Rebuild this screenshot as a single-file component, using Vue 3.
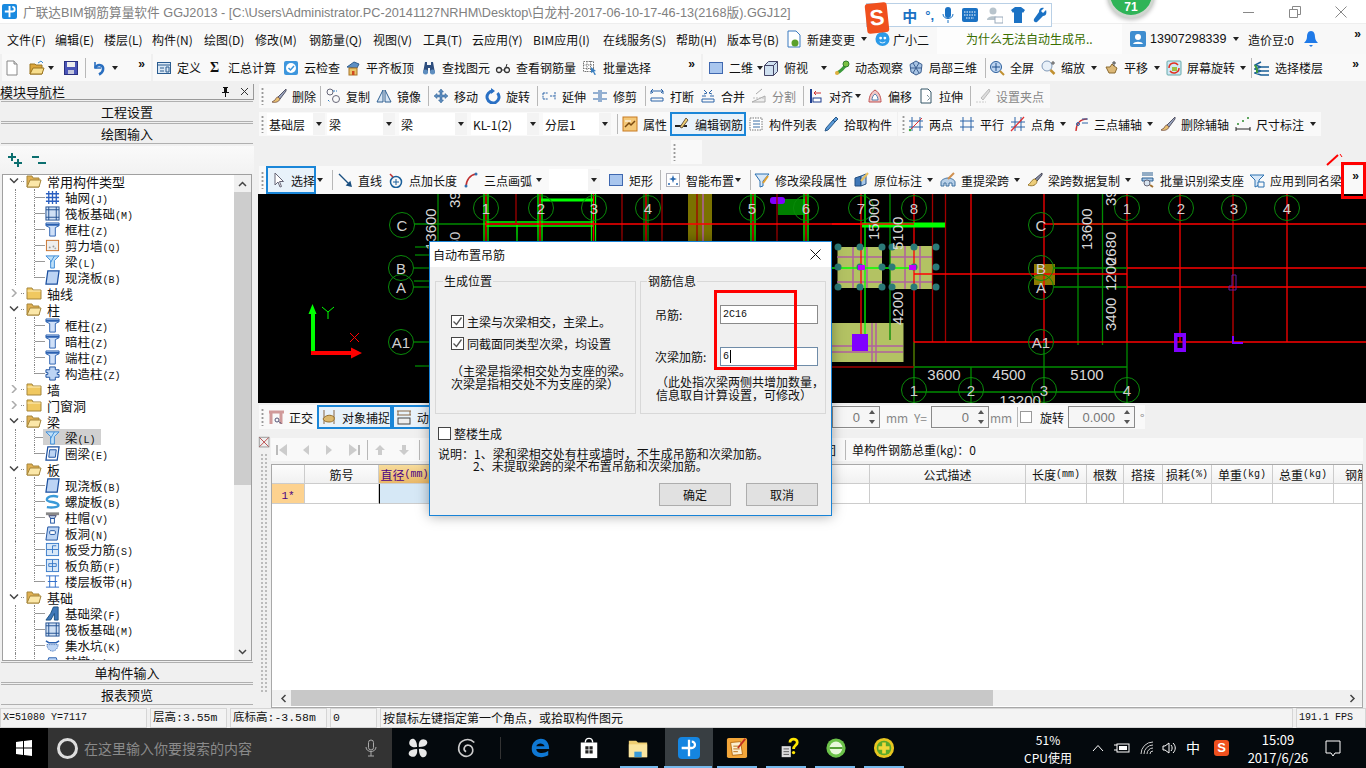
<script setup>
import { h } from 'vue'

const icons = {
  new: '<path d="M3 1h7l3 3v11H3z" fill="#fff" stroke="#888"/><path d="M10 1v3h3" fill="#ddd" stroke="#888"/>',
  open: '<path d="M1 4h5l1 1h6v9H1z" fill="#dba63c" stroke="#9a7420"/><path d="M4 8h11l-2 6H1z" fill="#f7de8d" stroke="#9a7420"/><path d="M9 3l3-2 2 2" fill="none" stroke="#3a8ad0"/>',
  save: '<rect x="1.500" y="1.500" width="13" height="13" fill="#4a55b8" stroke="#2a3080"/><rect x="4" y="2" width="8" height="5" fill="#eee"/><rect x="5" y="10" width="6" height="4" fill="#c5c8dd"/>',
  undo: '<path d="M4 2v6h6" fill="none" stroke="#2a6fc0" stroke-width="1.600"/><path d="M4 8c3-5 9-3 8 2-.4 2-2 3.500-4 4.500" fill="none" stroke="#2a6fc0" stroke-width="2.600"/>',
  def: '<rect x="1.500" y="2.500" width="13" height="11" fill="#dbe8f5" stroke="#2a5c90"/><path d="M2 5h12M4 8h4M4 11h4M10 7h3v5h-3z" fill="none" stroke="#2a5c90"/>',
  cloud: '<rect x="1" y="1" width="14" height="14" rx="2" fill="#3d96dd"/><circle cx="8" cy="8" r="5" fill="#fff"/><path d="M5.500 8l2 2 3.500-4" fill="none" stroke="#3d96dd" stroke-width="1.500"/>',
  flat: '<path d="M2 7l7-5 5 2-2 4z" fill="#5c8fc4" stroke="#305f90"/><rect x="4" y="8" width="8" height="7" fill="#e8c56a" stroke="#a8752a"/><rect x="7" y="11" width="2.500" height="4" fill="#d04a20"/>',
  binoc: '<path d="M4 2h2v3h4V2h2l2 11H9V8H7v5H2z" fill="#2f4f7f"/><circle cx="4.500" cy="12" r="2.500" fill="#5f8fc0"/><circle cx="11.500" cy="12" r="2.500" fill="#5f8fc0"/>',
  glass: '<circle cx="4" cy="10" r="2.500" fill="none" stroke="#333" stroke-width="1.300"/><circle cx="12" cy="10" r="2.500" fill="none" stroke="#333" stroke-width="1.300"/><path d="M6.500 10h3M11 7l1-3" stroke="#333"/>',
  batch: '<path d="M1.500 1.500h10v10h-10zM5 1v11M8.500 1v11M1 5h11M1 8.500h11" fill="#fff" stroke="#777" stroke-dasharray="1.500 1"/><path d="M9 7l5 4-2 .5 2 3-1.500.5-1.500-3-2 1z" fill="#3a7fc0"/>',
  rect: '<rect x="1.500" y="2.500" width="13" height="11" fill="#a9c6ee" stroke="#3f68b0"/>',
  box3d: '<path d="M1.500 5.500l4-4h9v10l-4 4h-9z" fill="#cfe0f0" stroke="#446"/><path d="M1.500 5.500h9v10M10.500 5.500l4-4" fill="none" stroke="#446"/>',
  orbit: '<path d="M3 13C6 12 11 7 13 3" stroke="#3b9a3b" stroke-width="3" fill="none"/><circle cx="12" cy="4" r="3" fill="#7ac043" stroke="#2f7a2f"/><circle cx="3" cy="13" r="2" fill="#e0b040"/>',
  cube: '<path d="M8 1l6 3.500-1 8L8 15 3 12 2 4.500z" fill="#a8c4e4" stroke="#3c5f90"/><path d="M5 3l6 10M11 3L5 13M2 8h12" stroke="#3c5f90" fill="none"/>',
  zoomall: '<circle cx="7" cy="7" r="5.500" fill="#bcd4f0" stroke="#2c5f9c"/><path d="M7 3v8M3 7h8" stroke="#1f4f8c"/><path d="M11 11l4 4" stroke="#c09030" stroke-width="2"/>',
  zoom: '<circle cx="7" cy="6" r="5" fill="#e8f0f8" stroke="#8099b8"/><path d="M10.500 10l4 4" stroke="#c09030" stroke-width="2.500"/><path d="M13 1v4M11 3h4" stroke="#555"/>',
  hand: '<path d="M3 7l3 6h6l2-5-3-2-2-2-2 3z" fill="#dcb877" stroke="#8a6a30"/><path d="M11 1v5M9 3h4" stroke="#444"/>',
  rot: '<rect x="1" y="1" width="14" height="14" rx="1" fill="#cfe8f5" stroke="#6aa"/><path d="M3 8a5 5 0 019-3M13 8a5 5 0 01-9 3" fill="none" stroke="#e03020" stroke-width="1.500"/><rect x="6" y="7" width="5" height="4" fill="#a0c040"/>',
  layers: '<path d="M7 2l-6 3 6 2h8M7 7l-6 2 6 2h8M7 11l-6 2 6 2h8" fill="none" stroke="#1a5f96" stroke-width="1.500"/><path d="M1 5l2 4 0 4" stroke="#3f9a3f" stroke-width="2" fill="none"/>',
  brush: '<path d="M15 1L7 9l2 2 6-8z" fill="#9aa6c0" stroke="#556"/><path d="M7 9c-2 0-2 2-3 3l-3 2c3 1 7 0 8-3z" fill="#e8c070" stroke="#865"/>',
  copy: '<circle cx="5" cy="4" r="3" fill="none" stroke="#667"/><circle cx="11" cy="11" r="3.500" fill="none" stroke="#667"/><path d="M8 3h4M3 12l2 2" stroke="#2a7ac0" stroke-dasharray="2 1"/>',
  mirror: '<path d="M7 2L1 14h6zM9 2l6 12H9z" fill="#d8e6f4" stroke="#2f5f90"/>',
  move: '<path d="M8 1l2.500 3H9v3h3V5.500L15 8l-3 2.500V9H9v3h1.500L8 15l-2.500-3H7V9H4v1.500L1 8l3-2.500V7h3V4H5.500z" fill="#5b8bbd" stroke="#2d5f90" stroke-width=".5"/>',
  rotb: '<path d="M12.500 5a6 6 0 11-4.500-2" fill="none" stroke="#2a70c4" stroke-width="3"/><path d="M6 0l4 3-4 3z" fill="#2a70c4"/>',
  ext: '<path d="M2 5h5M2 11h5M2 5v6M9 8h5M14 4v8" fill="none" stroke="#2c64a8" stroke-dasharray="2 .7"/>',
  trim: '<path d="M1 5h5M1 11h5M10 5h5M10 11h5M7 2v12M9 2v12" fill="none" stroke="#2c64a8"/>',
  brk: '<path d="M2 6V3h12v3M2 10h12v3H2z" fill="none" stroke="#2c64a8"/><path d="M4 1l-2 2 2 2M12 1l2 2-2 2" fill="none" stroke="#2c64a8"/>',
  merge: '<path d="M2 11h12v3H2zM2 8h4M10 8h4" fill="none" stroke="#2c64a8"/><path d="M4 2l3 3-3 1M12 2L9 5l3 1" fill="none" stroke="#2c64a8"/>',
  split: '<path d="M1 14l13-6v6zM5 6l6-5" fill="#eee" stroke="#aaa"/><path d="M2 10h11" stroke="#bbb" stroke-dasharray="2 1"/>',
  align: '<path d="M3 1v14" stroke="#1f3f8f" stroke-width="2"/><rect x="5" y="10" width="8" height="4" fill="#fff" stroke="#1f3f8f"/><path d="M13 5H6M8 3L6 5l2 2" fill="none" stroke="#d03030"/>',
  offs: '<path d="M8 2c5 3 6 8 6 12H2c0-4 1-9 6-12z" fill="#f0c8c8" stroke="#c05050"/><path d="M8 6c2 1 3 4 3 6H5c0-2 1-5 3-6z" fill="#fff" stroke="#5080b0"/>',
  stretch: '<path d="M3 1h7l3 3v11H3z" fill="#fff" stroke="#356"/><path d="M9 7l3 3-3 3" fill="none" stroke="#356" stroke-dasharray="1 1"/>',
  peng: '<path d="M14 1L6 10l2 2 7-9z" fill="#ddd" stroke="#bbb"/><path d="M1 14h10" stroke="#ccc" stroke-dasharray="2 1"/>',
  prop: '<rect x="1" y="1" width="14" height="14" fill="#f4c878" stroke="#c87a20"/><path d="M3 11l4-4 2 2 4-4" fill="none" stroke="#7a4a10" stroke-width="1.500"/><path d="M3 5h6" stroke="#fff"/>',
  editbar: '<path d="M1 10h12" stroke="#222" stroke-width="2"/><path d="M12 2L6 11l2 1 6-8z" fill="#f0d070" stroke="#654"/>',
  list: '<path d="M2 2h12v12H2z" fill="#fff" stroke="#777" stroke-dasharray="1.500 1"/><path d="M5 5h7M5 8h7M5 11h7" stroke="#3a6fa5"/>',
  pick: '<path d="M13 1l2 2-3 3-2-2zM10 4l2 2-7 8-3 1 1-3z" fill="#5a9ad8" stroke="#2a5a8a"/>',
  twop: '<path d="M4 1v14M12 1v14M1 5h14M1 11h14" stroke="#2c64a8"/><path d="M2 14L14 2" stroke="#e03030"/><circle cx="2" cy="14" r="1.200" fill="#3a3"/>',
  para: '<path d="M4 1v14M12 1v14M1 5h14M1 11h14" stroke="#2c64a8"/>',
  angle: '<path d="M5 1v14M11 1v14M1 6h14M1 11h14" stroke="#2c64a8"/><path d="M1 15L14 1" stroke="#e03030" stroke-width="1.300"/>',
  arc: '<path d="M3 15C3 8 7 3 14 3" fill="none" stroke="#d03030" stroke-width="1.400"/><path d="M9 3h6M9 7h6" stroke="#2c64a8"/><circle cx="5" cy="8" r="1.500" fill="none" stroke="#2c64a8"/>',
  dim: '<path d="M1 13h14M1 11v4M15 11v4" stroke="#222"/><circle cx="3" cy="8" r="1" fill="#2c8a2c"/><circle cx="13" cy="2" r="1" fill="#2c8a2c"/><circle cx="8" cy="5" r="1" fill="#2c8a2c"/>',
  cursor: '<path d="M5 1v12l3-3 2 5 1.500-.5-2-5h4z" fill="#fff" stroke="#667"/>',
  line: '<path d="M2 2l12 12M14 14l-4-1 3-3z" stroke="#1a4f80" fill="#1a4f80" stroke-width="1.400"/>',
  ptlen: '<circle cx="8" cy="10" r="5.500" fill="none" stroke="#1a5f9a" stroke-width="1.500"/><path d="M8 7v6M5 10h6" stroke="#1a5f9a"/><path d="M2 2l3 3" stroke="#c03030" stroke-width="1.500"/>',
  arc2: '<path d="M3 15C3 8 7 3 13 2" fill="none" stroke="#c03030" stroke-width="1.500"/><circle cx="13" cy="2" r="1.500" fill="#3070b0"/><circle cx="3" cy="14" r="1.500" fill="#3070b0"/>',
  smart: '<rect x="1.500" y="1.500" width="13" height="13" fill="#fff" stroke="#667" stroke-dasharray="1 1"/><path d="M8 3l1 3 3 1-3 1-1 3-1-3-3-1 3-1z" fill="#2a6ab0"/><circle cx="4" cy="12" r="1" fill="#2a6ab0"/><circle cx="12" cy="12" r="1" fill="#2a6ab0"/>',
  edit: '<path d="M1 2h14L9 9v5l-3 1V9z" fill="#d8e8f8" stroke="#2a70b0"/><path d="M14 4L9 11" stroke="#e0a030" stroke-width="2"/>',
  orig: '<path d="M2 14V6l6-2v10z" fill="#3f78b8" stroke="#244f80"/><path d="M8 4l5-2v10l-5 2z" fill="#a9c8e8" stroke="#244f80"/><path d="M15 1L8 9" stroke="#e8c060" stroke-width="2"/>',
  re: '<path d="M1 14v-4c0-2 4-4 7-4s7 2 7 4v4h-3v-3H9v3H6v-3H4v3z" fill="#b8d0e8" stroke="#3f70a0"/><path d="M14 1L8 7" stroke="#d09050" stroke-width="2"/>',
  brush2: '<path d="M15 1L8 7l2 2 5-6z" fill="#8a93a8" stroke="#445"/><path d="M8 7C5 7 4 11 1 13c4 2 9 0 9-4z" fill="#eccd7a" stroke="#9a7a30"/>',
  bat: '<path d="M3 1h11M3 3h11" stroke="#2a5f90"/><path d="M3 6h11v3H3z" fill="#a8c8e8" stroke="#2a5f90"/><circle cx="8" cy="11" r="3" fill="#d8e4f0" stroke="#667"/><path d="M11 13l3 2" stroke="#a07030" stroke-width="2"/>',
  fun: '<path d="M1 3h14l-5 5v5l-4 2V8z" fill="#d8e8f8" stroke="#2a70b0"/><path d="M9 10h6v5H9z" fill="#f8f8f8" stroke="#2a70b0"/>',
  ortho: '<path d="M1 3h15M3 3v12M13 3v12" stroke="#d09a9a" stroke-width="3" fill="none"/><circle cx="9" cy="11" r="2" fill="none" stroke="#557"/><path d="M10.500 12.500l3 2" stroke="#557"/>',
  snap: '<path d="M3 1v14M13 1v14" stroke="#864"/><path d="M2 10c2-4 8-5 11-2 1 3-1 5-5 5-3 0-5-1-6-3z" fill="#dcb96f" stroke="#96702e"/>',
  dyn: '<path d="M1 2h14M1 6h14M2 2v4M14 2v4" stroke="#864" fill="none"/><rect x="2" y="9" width="12" height="6" fill="#eee" stroke="#444"/>',
  first: '<path d="M3 3v10" stroke="#bbb" stroke-width="2"/><path d="M13 2v12L5 8z" fill="#ccc"/>',
  prev: '<path d="M11 3v10L5 8z" fill="#ccc"/>',
  next: '<path d="M5 3v10l6-5z" fill="#ccc"/>',
  last: '<path d="M13 3v10" stroke="#bbb" stroke-width="2"/><path d="M3 2v12l8-6z" fill="#ccc"/>',
  up: '<path d="M8 3l5 5h-3v5H6V8H3z" fill="#ccc"/>',
  down: '<path d="M8 13l5-5h-3V3H6v5H3z" fill="#ccc"/>',
  closeb: '<rect x="1.500" y="1.500" width="12" height="12" fill="#eee" stroke="#888"/><path d="M2 2l11 11M13 2L2 13" stroke="#b03030"/>',
  fopen: '<path d="M1 3h5l1 2h6v9H1z" fill="#e0b052" stroke="#a5853a"/><path d="M4 7h11l-2 7H1z" fill="#fbe7a8" stroke="#a5853a"/>',
  fclosed: '<path d="M1 3h5l1 2h8v9H1z" fill="#f0c860" stroke="#a5853a"/><path d="M1.500 6h13" stroke="#fff0c0"/>',
  tgrid: '<path d="M1 4h14M1 8h14M1 12h14M4 1v14M8 1v14M12 1v14" stroke="#2a5fc0" stroke-width="1.400"/>',
  traft: '<rect x="1" y="1" width="14" height="14" fill="#cfe0f4" stroke="#204f90"/><path d="M1 4h14M1 12h14M4 1v14M12 1v14" stroke="#204f90"/>',
  tcol: '<path d="M1 1h14v3l-4 2v9H5V6L1 4z" fill="#cfe0f8" stroke="#2a60b0"/><path d="M1 3h14" stroke="#2a60b0" stroke-width="2"/>',
  twall: '<rect x="1.500" y="2.500" width="13" height="11" fill="#eee" stroke="#c8702a"/><circle cx="5" cy="10" r="1" fill="#999"/><circle cx="9" cy="9" r="1" fill="#999"/><circle cx="11" cy="11" r="1" fill="#aaa"/>',
  tbeam: '<path d="M1 2h14l-5 5v8H6V7z" fill="#bfe0f8" stroke="#3a8ad8"/><path d="M10 2L6 9" stroke="#3a8ad8"/>',
  tslab: '<path d="M3 1h12l-2 14H1z" fill="#bcd4f4" stroke="#1a4f9f" stroke-width="1.300"/>',
  tcons: '<path d="M5 1h6v3h4v3h-2v2h2v3h-4v3H5v-3H1V9h2V7H1V4h4z" fill="#bcd4f4" stroke="#1a4f9f"/>',
  tring: '<path d="M3 1h12l-2 14H1z" fill="#fff" stroke="#1a4f9f" stroke-width="1.300"/><path d="M5 4h7l-1 8H4z" fill="#bcd4f4" stroke="#1a4f9f"/>',
  tspiral: '<path d="M14 3C8 1 2 3 2 6s10 2 12 5-6 4-12 3" fill="none" stroke="#3a9ad8" stroke-width="2.500"/>',
  tcap: '<path d="M1 4h14" stroke="#888" stroke-width="3"/><path d="M4 6h8l-2 3H6z" fill="#bcd4f4" stroke="#446"/><rect x="6" y="9" width="4" height="5" fill="#fff" stroke="#1a4f9f"/>',
  thole: '<path d="M3 1h12l-2 14H1z" fill="#bcd4f4" stroke="#1a4f9f"/><rect x="5" y="5" width="6" height="4" rx="1" fill="#fff" stroke="#1a4f9f"/>',
  tforce: '<rect x="1.500" y="1.500" width="13" height="13" fill="#d8e8f8" stroke="#3a7ac8"/><path d="M2 8h12M8 4v8" stroke="#3a7ac8"/><path d="M8 4h4" stroke="#3a7ac8"/>',
  tneg: '<rect x="1.500" y="1.500" width="13" height="13" fill="#d8e8f8" stroke="#3a7ac8"/><path d="M4 6h8v3H4zM8 2v12" fill="none" stroke="#3a7ac8"/>',
  tband: '<path d="M1 2h14M1 14h14M5 2v12M11 2v12M3 8h10" stroke="#2a6ac8" fill="none"/>',
  tfbeam: '<path d="M1 15l5-7 3-7h5v14h-4V8L6 15z" fill="#3f78b8" stroke="#1a4f80"/>',
  tsump: '<path d="M1 3l3 2h8l3-2" fill="none" stroke="#2a60b0" stroke-width="1.500"/><path d="M2 7h12c0 4-3 7-6 7S2 11 2 7z" fill="#bcd4f4" stroke="#2a60b0" stroke-dasharray="1 1"/>',
  tpier: '<path d="M4 4h8l2 6H2z" fill="#bcd4f4" stroke="#2a60b0"/>',
  plus: '<path d="M5 1v8M1 5h8M11 7v8M7 11h8" stroke="#0c6f6f" stroke-width="2"/>',
  minus: '<path d="M1 5h7M7 11h8" stroke="#0c6f6f" stroke-width="2"/>'
}

const Ic = (p) => h('svg', { class: 'ic', viewBox: '0 0 16 16', width: p.s || 16, height: p.s || 16, innerHTML: icons[p.n] || '' })

function cell(it) {
  const [, k, t, o = {}] = it
  if (k === 'sep') return [h('i', { class: 'sep' })]
  if (k === 'grip') return [h('i', { class: 'grip' })]
  if (k === 'arr') return [h('i', { class: 'arr' })]
  if (k === 'more') return [h('span', { class: 'more' }, '»')]
  if (k === 'chk') return [h('i', { class: 'chkb' })]
  if (k === 'combo') return [h('div', { class: 'combo', style: { width: o.w + 'px' } }, [h('span', { class: 'ct' }, t), h('span', { class: 'cb' }, [h('i', { class: 'arr' })])])]
  if (k === 'spin') return [h('div', { class: 'spin', style: { width: o.w + 'px' } }, [h('span', { class: 'sv' }, t), h('span', { class: 'sb' }, [h('i', { class: 'su' }), h('i', { class: 'sd' })])])]
  const kids = []
  if (k) kids.push(h(Ic, { n: k }))
  if (t) kids.push(h('span', { class: ['tx', k ? 'tm' : '', o.gray ? 'gr' : '', o.b ? 'bd' : ''] }, t))
  if (o.w) return [h('div', { class: 'act', style: { width: o.w + 'px' } }, kids)]
  return kids
}

const Bar = (p) => {
  let cur = p.org || 0
  return h('div', { class: ['bar', p.cls] }, p.bands.map((b) => {
    const ml = b.s - cur
    cur = b.e
    const lead = b.items.length ? b.items[0][0] - b.s : 0
    return h('div', { class: 'band', style: { marginLeft: ml + 'px', width: b.e - b.s + 'px', paddingLeft: lead + 'px' } },
      b.items.map((it, i) => {
        const nx = i + 1 < b.items.length ? b.items[i + 1][0] : b.e
        return h('div', { class: 'it', style: { width: nx - it[0] + 'px' } }, cell(it))
      }))
  }))
}

const menu = [['文件(F)',48],['编辑(E)',49],['楼层(L)',48],['构件(N)',52],['绘图(D)',51],['修改(M)',54],['钢筋量(Q)',64],['视图(V)',50],['工具(T)',49],['云应用(Y)',61],['BIM应用(I)',70],['在线服务(S)',73],['帮助(H)',51],['版本号(B)',56]]

const r1 = [
  { s: 2, e: 151, items: [[4,'new'],[29,'open'],[48,'arr'],[63,'save'],[85,'sep'],[91,'undo'],[112,'arr'],[138,'more']] },
  { s: 153, e: 701, items: [[156,'def','定义'],[210,'','Σ',{b:1}],[228,'','汇总计算'],[283,'cloud','云检查'],[345,'flat','平齐板顶'],[421,'binoc','查找图元'],[495,'glass','查看钢筋量'],[582,'batch','批量选择'],[688,'more']] },
  { s: 703, e: 1366, items: [[708,'rect','二维'],[757,'arr'],[763,'box3d','俯视'],[821,'arr'],[834,'orbit','动态观察'],[908,'cube','局部三维'],[985,'sep'],[989,'zoomall','全屏'],[1040,'zoom','缩放'],[1091,'arr'],[1103,'hand','平移'],[1154,'arr'],[1166,'rot','屏幕旋转'],[1240,'arr'],[1251,'sep'],[1254,'layers','选择楼层'],[1352,'more']] }
]
const r2 = [{ s: 259, e: 1050, items: [[261,'grip'],[271,'brush','删除'],[320,'sep'],[325,'copy','复制'],[376,'mirror','镜像'],[428,'sep'],[433,'move','移动'],[485,'rotb','旋转'],[537,'sep'],[541,'ext','延伸'],[592,'trim','修剪'],[645,'sep'],[649,'brk','打断'],[700,'merge','合并'],[751,'split','分割',{gray:1}],[803,'sep'],[808,'align','对齐'],[855,'arr'],[867,'offs','偏移'],[918,'stretch','拉伸'],[970,'sep'],[975,'peng','设置夹点',{gray:1}]] }]
const r3 = [
  { s: 259, e: 897, items: [[261,'grip'],[267,'combo','基础层',{w:58}],[327,'combo','梁',{w:68}],[399,'combo','梁',{w:68}],[471,'combo','KL-1(2)',{w:68}],[543,'combo','分层1',{w:68}],[617,'sep'],[622,'prop','属性'],[670,'editbar','编辑钢筋',{w:76}],[748,'list','构件列表'],[823,'pick','拾取构件']] },
  { s: 898, e: 1321, items: [[902,'grip'],[908,'twop','两点'],[959,'para','平行'],[1010,'angle','点角'],[1060,'arr'],[1073,'arc','三点辅轴'],[1147,'arr'],[1160,'brush','删除辅轴'],[1235,'dim','尺寸标注'],[1310,'arr']] }
]
const r4 = [{ s: 671, e: 702, items: [[673,'grip']] }]
const r5 = [{ s: 259, e: 1366, items: [[261,'grip'],[266,'cursor','选择',{w:50}],[317,'arr'],[332,'sep'],[337,'line','直线'],[388,'ptlen','点加长度'],[463,'arc2','三点画弧'],[536,'arr'],[549,'combo','',{w:51}],[608,'rect','矩形'],[660,'sep'],[665,'smart','智能布置'],[735,'arr'],[750,'sep'],[754,'edit','修改梁段属性'],[853,'orig','原位标注'],[927,'arr'],[940,'re','重提梁跨'],[1014,'arr'],[1027,'brush2','梁跨数据复制'],[1125,'arr'],[1139,'bat','批量识别梁支座'],[1249,'fun','应用到同名梁'],[1352,'more']] }]
const r6 = [{ s: 259, e: 1145, items: [[261,'grip'],[268,'ortho','正交'],[317,'snap','对象捕捉',{w:75}],[392,'dyn','动态输入',{w:75}],[832,'spin','0',{w:48}],[886,'','mm',{gray:1}],[914,'','Y=',{gray:1}],[931,'spin','0',{w:58}],[990,'','mm',{gray:1}],[1017,'sep'],[1020,'chk'],[1040,'','旋转'],[1068,'spin','0.000',{w:67}],[1140,'','°',{gray:1}]] }]
const r7 = [{ s: 271, e: 1363, items: [[274,'first'],[298,'prev'],[321,'next'],[346,'last'],[367,'sep'],[372,'up'],[396,'down'],[419,'sep'],[824,'','团'],[845,'sep'],[852,'','单构件钢筋总重(kg)：0']] }]

const tree = [
  ['常用构件类型',1],['轴网','J','tgrid'],['筏板基础','M','traft'],['框柱','Z','tcol'],['剪力墙','Q','twall'],['梁','L','tbeam'],['现浇板','B','tslab',1],
  ['轴线',0],['柱',1],['框柱','Z','tcol'],['暗柱','Z','tcol'],['端柱','Z','tcol'],['构造柱','Z','tcons',1],
  ['墙',0],['门窗洞',0],['梁',1],['梁','L','tbeam',0,1],['圈梁','E','tring',1],
  ['板',1],['现浇板','B','tslab'],['螺旋板','B','tspiral'],['柱帽','V','tcap'],['板洞','N','thole'],['板受力筋','S','tforce'],['板负筋','F','tneg'],['楼层板带','H','tband',1],
  ['基础',1],['基础梁','F','tfbeam'],['筏板基础','M','traft'],['集水坑','K','tsump'],['柱墩','X','tpier']
].map((r) => (typeof r[1] === 'number'
  ? { group: true, name: r[0], open: !!r[1] }
  : { name: r[0], key: r[1], ic: r[2], last: !!r[3], sel: !!r[4] }))

const cols = [[33,'',''],[74,'筋号',''],[52,'直径','(mm)'],[439,'',''],[156,'公式描述',''],[61,'长度','(mm)'],[37,'根数',''],[39,'搭接',''],[49,'损耗','(%)'],[61,'单重','(kg)'],[61,'总重','(kg)'],[30,'钢筋','']]
const gridCols = cols.map((c) => c[0] + 'px').join(' ')

const R = '#ff0000', D = '#a00000', G = '#008c00', B = '#00ff00'
const lines = [
  [414,224,486,224,G],[415,247,430,247,G],[415,255,430,255,G],[414,268,430,268,G],[414,281,430,281,G],[414,287,430,287,G],[414,342,430,342,G],[415,366,430,366,G],
  [438,194,438,241,G],[517,225,517,241,B],
  [486,222,593,222,B],[486,226,593,226,B],
  [484,194,484,241,B],[488,194,488,241,B],[538,194,538,241,B],[542,194,542,241,B],[591.5,194,591.5,241,B],[595.5,194,595.5,241,B],[644,194,644,241,G],[648,194,648,241,G],[751,194,751,241,B],[755,194,755,241,B],[804,194,804,241,B],[808,194,808,241,B],
  [516,194,516,224,D],[622,194,622,241,D],[662,194,662,241,D],[697,194,697,241,D],[777,194,777,241,D],
  [486,194,486,241,R],[540,194,540,241,R],[593.5,194,593.5,241,R],[646,194,646,241,R],[753,194,753,241,R],[806,194,806,241,R],
  [541,200,593,200,B,3],
  [485,224,914,224,R],
  [890,194,890,340,G],[865,194,865,342,B],[861,194,861,342,R],[914,194,914,366,R],[932.500,194,932.500,342,D],[945.500,194,945.500,342,D],
  [971,194,971,342,R],[1044,194,1044,342,R],[1127,194,1127,342,R],[1180,194,1180,342,R],[1233,194,1233,342,R,1],[1287,194,1287,342,R],
  [1078,194,1078,345,G],[1102.500,194,1102.500,345,G],
  [914,342,914,403,G],[971,367,971,403,G],[1044,342,1044,403,G],[1127,342,1127,403,G],
  [914,367,1127,367,G],[914,392,1127,392,G],
  [862,225,945,225,B,5],[832,268,914,268,B],
  [1054,224,1127,224,G],[1054,268,1127,268,G],[1054,287,1127,287,G],
  [1044,224,1366,224,R],[1127,268,1366,268,R],[914,274,1127,274,R],[1127,287,1366,287,R],[914,342,1366,342,R],[832,367,914,367,D],[832,224,914,224,R]
]
const dots = []
for (const y of [247,267,287]) for (const x of [838,860,882,892,914,936]) dots.push([x,y])
const circles = [[486,208,'1'],[541,208,'2'],[594,208,'3'],[648,208,'4'],[752,208,'5'],[806,208,'6'],[861,208,'7'],[914,208,'8'],[1127,208,'1'],[1181,208,'2'],[1234,208,'3'],[1287,208,'4'],
  [402,225,'C'],[401,268,'B'],[401,287,'A'],[401,342,'A1'],[1041,225,'C'],[1041,268,'B'],[1041,287,'A'],[1041,342,'A1'],[914,390,'1'],[971,390,'2'],[1044,390,'3'],[1127,390,'4']]
const vtext = [[436,250,'13600'],[460,208,'39'],[460,265,'2680'],[879,240,'15000'],[903,250,'5100'],[903,325,'4200'],[1092,250,'13600'],[1116,265,'2680'],[1116,291,'1200'],[1116,331,'3400'],[1116,206,'39']]
const htext = [[944,380,'3600'],[1009,380,'4500'],[1087,380,'5100'],[1020,406,'13200']]
const status = [[147,'X=51080 Y=7117',1],[77,'层高:3.55m',2],[97,'底标高:-3.58m',2],[47,'0',2],[913,'按鼠标左键指定第一个角点，或拾取构件图元',0],[70,'191.1 FPS',1]]
const running = [[620,38],[664,48],[717,40],[766,40],[815,40],[864,40]]
</script>

<template>
  <div class="page">
    <header class="title">
      <span class="logo"><svg width="15" height="15" viewBox="0 0 16 16"><path d="M8 2v12M3 8h8a2.500 2.500 0 000-5" fill="none" stroke="#fff" stroke-width="2"/></svg></span>
      <span class="ttl">广联达BIM钢筋算量软件 GGJ2013 - [C:\Users\Administrator.PC-20141127NRHM\Desktop\白龙村-2017-06-10-17-46-13(2168版).GGJ12]</span>
      <div class="winbtns">
        <svg width="14" height="14" viewBox="0 0 14 14"><path d="M1 7.500h11" stroke="#888"/></svg>
        <svg width="14" height="14" viewBox="0 0 14 14"><path d="M1.500 4.500h8v8h-8zM4.500 4V1.500h8v8H10" fill="none" stroke="#888"/></svg>
        <svg width="14" height="14" viewBox="0 0 14 14"><path d="M1.500 1.500l11 11M12.500 1.500l-11 11" stroke="#888"/></svg>
      </div>
    </header>

    <nav class="menu">
      <span v-for="m in menu" :key="m[0]" class="mi" :style="{ width: m[1] + 'px' }">{{ m[0] }}</span>
      <span class="mi2"><svg width="14" height="18" viewBox="0 0 14 18"><path d="M1 1h8l4 4v12H1z" fill="#fff" stroke="#3a7ac0"/><circle cx="8" cy="13" r="3.500" fill="#5aa02c"/></svg>新建变更</span>
      <i class="arrm a-a"></i>
      <span class="mi3"><svg width="15" height="16" viewBox="0 0 16 16"><circle cx="8" cy="8" r="7.500" fill="#2b9ae8"/><circle cx="6" cy="7" r="1.500" fill="#fff"/><circle cx="10.500" cy="7" r="1.500" fill="#fff"/><path d="M5 11c2 1.500 4 1.500 6 0" stroke="#fff" fill="none"/></svg>广小二</span>
      <span class="ask">为什么无法自动生成吊..</span>
      <span class="user"><svg width="16" height="16" viewBox="0 0 16 16"><rect width="16" height="16" rx="2" fill="#3f8ed0"/><circle cx="8" cy="6" r="3" fill="#fff"/><path d="M3 13c1-3 9-3 10 0z" fill="#fff"/></svg>13907298339</span>
      <i class="arrm a-b"></i>
      <span class="bean">造价豆:0</span>
      <svg class="bell" width="14" height="18" viewBox="0 0 14 18"><path d="M7 1c3 0 4 3 4 6 0 3 2 5 3 6H0c1-1 3-3 3-6 0-3 1-6 4-6z" fill="#1f7ae8"/><path d="M5 15h4l-2 2z" fill="#1f7ae8"/></svg>
      <span class="more end">»</span>
    </nav>

    <Bar class="r1" :bands="r1" />

    <div class="main">
      <aside class="side">
        <div class="sh"><span>模块导航栏</span>
          <svg class="pin" width="11" height="11" viewBox="0 0 11 11"><path d="M3 1h5v1H7v4h2v1H6v4H5V7H2V6h2V2H3z" fill="#111"/></svg>
          <svg width="9" height="9" viewBox="0 0 9 9"><path d="M1 1l7 7M8 1L1 8" stroke="#333"/></svg>
        </div>
        <div class="sbtn">工程设置</div>
        <div class="sbtn">绘图输入</div>
        <div class="ttools"><Ic n="plus" /><Ic n="minus" /></div>
        <div class="treebox">
          <div class="tree">
            <div v-for="(r, i) in tree" :key="i" class="tr" :class="{ grp: r.group }">
              <template v-if="r.group">
                <svg class="chev" width="10" height="8" viewBox="0 0 10 8"><path v-if="r.open" d="M1 1.500l4 4 4-4" fill="none" stroke="#444" stroke-width="1.500"/><path v-else d="M3 0l4 4-4 4" fill="none" stroke="#aaa" stroke-width="1.500"/></svg>
                <i class="dash"></i>
                <Ic :n="r.open ? 'fopen' : 'fclosed'" />
                <span class="gt">{{ r.name }}</span>
              </template>
              <template v-else>
                <i class="vl"></i>
                <i class="cl" :class="{ lastc: r.last }"></i>
                <span class="leaf" :class="{ sel: r.sel }"><Ic :n="r.ic" /><span class="lt2">{{ r.name }}<span class="lat">({{ r.key }})</span></span></span>
              </template>
            </div>
          </div>
          <div class="vscroll">
            <span class="sa"><svg width="9" height="6" viewBox="0 0 9 6"><path d="M1 5l3.500-3.500L8 5" fill="none" stroke="#444" stroke-width="1.500"/></svg></span>
            <span class="thumb"></span>
            <span class="sa bot"><svg width="9" height="6" viewBox="0 0 9 6"><path d="M1 1l3.500 3.500L8 1" fill="none" stroke="#444" stroke-width="1.500"/></svg></span>
          </div>
        </div>
        <div class="sbtn low">单构件输入</div>
        <div class="sbtn low">报表预览</div>
      </aside>

      <section class="work">
        <Bar class="r2" :org="258" :bands="r2" />
        <Bar class="r3" :org="258" :bands="r3" />
        <Bar class="r4" :org="258" :bands="r4" />
        <Bar class="r5" :org="258" :bands="r5" />

        <div class="canvas">
          <svg width="1108" height="209" viewBox="258 194 1108 209">
            <rect x="258" y="194" width="1108" height="209" fill="#000" />
            <rect x="688" y="194" width="24" height="47" fill="#7a7200" />
            <rect x="837.500" y="247" width="44.500" height="41" fill="#b3c263" />
            <rect x="890" y="246" width="43" height="43" fill="#b3c263" />
            <rect x="832" y="323" width="71.500" height="39" fill="#b3c263" />
            <rect x="778" y="199" width="27" height="16" fill="#008000" />
            <rect x="770" y="197" width="15" height="7" rx="3" fill="#8000ff" />
            <rect x="1034" y="264" width="21" height="21" fill="#8a7a00" />
            <path d="M703 194v47M853 247v41M867 247v41M905 246v43M920 246v43M837 257h45M890 257h43M837 282h45M890 282h43M872 323v39M876 323v39M832 346h71M832 352h71" stroke="#b060a0" stroke-width="1.500" />
            <line v-for="(l, i) in lines" :key="'l' + i" :x1="l[0]" :y1="l[1]" :x2="l[2]" :y2="l[3]" :stroke="l[4]" :stroke-width="l[5] || 1.300" />
            <circle v-for="(d, i) in dots" :key="'d' + i" :cx="d[0]" :cy="d[1]" r="3.500" fill="#2b7a78" />
            <rect x="852" y="334" width="16" height="17" fill="#8000ff" />
            <rect x="858" y="265" width="7" height="5" fill="#c000ff" />
            <rect x="909" y="265" width="7" height="5" fill="#c000ff" />
            <path d="M1174 333h12v19h-12zM1177.500 337v11h5v-11z" fill="#8000ff" fill-rule="evenodd" />
            <path d="M1233 336v7h10" fill="none" stroke="#8000ff" stroke-width="2" />
            <path d="M1232 275h4v15h-7v-4h3z" fill="none" stroke="#60209f" />
            <circle v-for="(c, i) in circles" :key="'c' + i" :cx="c[0]" :cy="c[1]" r="12.500" fill="none" stroke="#0a8a0a" />
            <text v-for="(c, i) in circles" :key="'t' + i" :x="c[0]" :y="c[1] + 6" class="cl-t" text-anchor="middle">{{ c[2] }}</text>
            <text v-for="(t, i) in vtext" :key="'v' + i" class="dim" :transform="`rotate(-90 ${t[0]} ${t[1]})`" :x="t[0]" :y="t[1]">{{ t[2] }}</text>
            <text v-for="(t, i) in htext" :key="'h' + i" class="dim" :x="t[0]" :y="t[1]" text-anchor="middle">{{ t[2] }}</text>
            <path d="M311 352v-38h-2.500l4-10 4 10H315v38z" fill="#00ff00" />
            <path d="M311 351h40v-3.500l11 5.500-11 5.500V355h-40z" fill="#ff0000" />
            <path d="M322 307l6 5 6-5M328 312v7" fill="none" stroke="#00ff00" />
            <path d="M350 333l9 9M359 333l-9 9" stroke="#ff0000" />
          </svg>
        </div>

        <Bar class="r6" :org="258" :bands="r6" />

        <div class="lower">
          <div class="strip"><Ic n="closeb" :s="13" /><i class="dots"></i></div>
          <div class="parts">
            <Bar class="r7" :org="271" :bands="r7" />
            <div class="table">
              <div class="thead" :style="{ gridTemplateColumns: gridCols }">
                <div v-for="(c, i) in cols" :key="i" class="th" :class="{ hot: i === 2, clip: i === 11 }">{{ c[1] }}<span class="lat">{{ c[2] }}</span></div>
              </div>
              <div class="trow" :style="{ gridTemplateColumns: gridCols }">
                <div v-for="(c, i) in cols" :key="i" class="td" :class="{ rh: i === 0, cur: i === 2 }"><span v-if="i === 0" class="lat num">1*</span></div>
              </div>
              <div class="fill"></div>
              <div class="hscroll">
                <svg class="ha" width="7" height="9" viewBox="0 0 7 9"><path d="M5.500 1L2 4.500 5.500 8" fill="none" stroke="#444" stroke-width="1.500"/></svg>
                <span class="hthumb"></span>
                <svg class="ha hr" width="7" height="9" viewBox="0 0 7 9"><path d="M1.500 1L5 4.500 1.500 8" fill="none" stroke="#444" stroke-width="1.500"/></svg>
              </div>
            </div>
          </div>
        </div>
      </section>
    </div>

    <footer class="status">
      <div v-for="s in status" :key="s[1]" class="sc" :class="{ mono: s[2] === 1, mix: s[2] === 2 }" :style="{ width: s[0] + 'px' }">{{ s[1] }}</div>
    </footer>

    <div class="taskbar">
      <div class="start"><svg width="18" height="18" viewBox="0 0 18 18"><path d="M1 3l7-1v6.500H1zM9 2l8-1v7.500H9zM1 9.500h7V16l-7-1zM9 9.500h8V17l-8-1z" fill="#fff"/></svg></div>
      <div class="search">
        <i class="cort"></i>
        <span class="stx">在这里输入你要搜索的内容</span>
        <svg class="mic" width="12" height="18" viewBox="0 0 12 18"><rect x="3.500" y="1" width="5" height="10" rx="2.500" fill="none" stroke="#aaa"/><path d="M1 8c0 6 10 6 10 0M6 13v4M3 17h6" fill="none" stroke="#aaa"/></svg>
      </div>
      <div class="tapps">
        <svg class="ta a1" viewBox="0 0 24 24"><path d="M11 11C4 12 1 8 3 4s8-3 8 7zM13 11c-1-7 3-10 7-8s3 8-7 8zM13 13c7-1 10 3 8 7s-8 3-8-7zM11 13c1 7-3 10-7 8s-3-8 7-8z" fill="#e8e8e8"/></svg>
        <svg class="ta a2" viewBox="0 0 24 24"><path d="M20 6C14 0 4 3 3 11s7 12 12 9 4-10-1-11-7 5-3 7" fill="none" stroke="#ccc" stroke-width="1.800"/></svg>
        <i class="tsep"></i>
        <svg class="ta a3" viewBox="0 0 24 24"><path d="M3 13C3 6 8 2 13 2c6 0 9 5 9 11H8c0 5 8 6 13 2v5c-7 4-18 2-18-7zm5-3h9c-1-4-8-4-9 0z" fill="#0f78d4"/></svg>
        <svg class="ta a4" viewBox="0 0 24 24"><path d="M3 6h18v17H3z" fill="#fff"/><path d="M8 6c0-6 8-6 8 0" fill="none" stroke="#fff" stroke-width="1.500"/><path d="M8 10h3.500v3.500H8zM12.500 10H16v3.500h-3.500zM8 14.500h3.500V18H8zM12.500 14.500H16V18h-3.500z" fill="#222"/></svg>
        <svg class="ta a5" viewBox="0 0 24 24"><path d="M2 4h8l2 2h10v16H2z" fill="#f0cf73"/><rect x="2" y="8" width="20" height="14" fill="#fbe6a0"/><path d="M8 22v-6h8v6z" fill="#3a9ad8"/></svg>
        <span class="a6"><svg width="22" height="22" viewBox="0 0 24 24"><path d="M12 3v18M4 12h11a3.500 3.500 0 000-7" fill="none" stroke="#fff" stroke-width="2.500"/></svg></span>
        <svg class="ta a7" viewBox="0 0 24 24"><rect x="1" y="1" width="22" height="22" rx="2" fill="#f2a63a"/><path d="M5 6l11-1 2 14-11 1z" fill="#fbeed0" stroke="#b76a10"/><path d="M8 10h7M8 13h7M8 16h5" stroke="#b76a10"/><path d="M21 2L13 12" stroke="#c03020" stroke-width="2"/></svg>
        <svg class="ta a8" viewBox="0 0 24 24"><rect x="4" y="10" width="10" height="12" fill="#ddd"/><path d="M6 13h6M6 16h6M6 19h6" stroke="#555"/><path d="M13 6c0-5 8-5 8 0 0 3-4 3-4 7" fill="none" stroke="#ffe600" stroke-width="3"/><circle cx="17" cy="17" r="1.800" fill="#ffe600"/></svg>
        <svg class="ta a9" viewBox="0 0 24 24"><circle cx="12" cy="12" r="10.500" fill="#6cc24a"/><circle cx="12" cy="12" r="7" fill="#e8f8dc"/><path d="M5 12h14" stroke="#4a9a2a" stroke-width="2"/></svg>
        <svg class="ta a10" viewBox="0 0 24 24"><circle cx="12" cy="12" r="11" fill="#e8c620"/><circle cx="12" cy="12" r="8" fill="#5aa82c"/><path d="M10 6h4v4h4v4h-4v4h-4v-4H6v-4h4z" fill="#f0d83a"/></svg>
      </div>
      <i v-for="b in running" :key="b[0]" class="runb" :style="{ left: b[0] + 'px', width: b[1] + 'px' }"></i>
      <div class="tray">
        <div class="cpu"><span>51%</span><span>CPU使用</span></div>
        <svg class="t1" width="12" height="8" viewBox="0 0 12 8"><path d="M1 7l5-5.500L11 7" fill="none" stroke="#fff"/></svg>
        <svg class="t2" width="16" height="12" viewBox="0 0 16 12"><rect x="3" y="2" width="12" height="8" fill="none" stroke="#fff"/><rect x="5" y="4" width="8" height="4" fill="#fff"/><path d="M0 3h3M0 8h3" stroke="#fff"/></svg>
        <svg class="t3" width="14" height="14" viewBox="0 0 14 14"><path d="M1 13A12 12 0 0113 1M4 13a9 9 0 019-9M7 13a6 6 0 016-6M10 13a3 3 0 013-3" fill="none" stroke="#ccc"/></svg>
        <svg class="t4" width="14" height="14" viewBox="0 0 14 14"><path d="M1 5h2l4-3v10L3 9H1zM9 4c1.500 1.500 1.500 4.500 0 6M11 2c3 3 3 7 0 10" fill="none" stroke="#fff"/></svg>
        <span class="t5">中</span>
        <span class="t6">S</span>
        <div class="clock"><span>15:09</span><span>2017/6/26</span></div>
        <svg class="t7" width="16" height="17" viewBox="0 0 16 17"><path d="M1 1h14v12h-5l-2 3-2-3H1z" fill="none" stroke="#fff"/></svg>
      </div>
    </div>

    <div class="dialog">
      <div class="dtitle"><span>自动布置吊筋</span><svg width="11" height="11" viewBox="0 0 11 11"><path d="M.5.500l10 10M10.500.500l-10 10" stroke="#111"/></svg></div>
      <div class="dbody">
        <div class="groups">
          <fieldset class="fs f1">
            <legend>生成位置</legend>
            <label class="chk"><i class="cb2 on"><svg width="11" height="11" viewBox="0 0 11 11"><path d="M1.500 5.500l3 3 5-7" fill="none" stroke="#555" stroke-width="1.300"/></svg></i>主梁与次梁相交，主梁上。</label>
            <label class="chk"><i class="cb2 on"><svg width="11" height="11" viewBox="0 0 11 11"><path d="M1.500 5.500l3 3 5-7" fill="none" stroke="#555" stroke-width="1.300"/></svg></i>同截面同类型次梁，均设置</label>
            <p class="note n1">（主梁是指梁相交处为支座的梁。<br />次梁是指相交处不为支座的梁）</p>
          </fieldset>
          <fieldset class="fs f2">
            <legend>钢筋信息</legend>
            <div class="field"><span>吊筋:</span><span class="inp">2C16</span></div>
            <div class="field f-b"><span>次梁加筋:</span><span class="inp act2">6<i class="caret"></i></span></div>
            <p class="note n2">（此处指次梁两侧共增加数量，<br />信息取自计算设置，可修改）</p>
          </fieldset>
        </div>
        <label class="chk whole"><i class="cb2"></i>整楼生成</label>
        <div class="desc"><span>说明：1、梁和梁相交处有柱或墙时，不生成吊筋和次梁加筋。</span><span class="d2">2、未提取梁跨的梁不布置吊筋和次梁加筋。</span></div>
        <div class="dbtns"><button class="db">确定</button><button class="db">取消</button></div>
      </div>
    </div>
    <i class="redbox rb1"></i>
    <i class="redbox rb2"></i>
    <svg class="slash" width="20" height="14" viewBox="0 0 20 14"><path d="M1 12L12 2" stroke="#f00" stroke-width="2"/><path d="M14 1l2 3" stroke="#f00"/></svg>

    <div class="ime">
      <span class="s-logo">S</span>
      <span class="ime-z">中</span>
      <span class="ime-p">°,</span>
      <svg width="12" height="18" viewBox="0 0 12 18"><rect x="3" y="1" width="6" height="11" rx="3" fill="#1b72c4"/><path d="M1 8c0 6 10 6 10 0M6 14v3" fill="none" stroke="#1b72c4"/></svg>
      <svg width="16" height="14" viewBox="0 0 16 14"><rect width="16" height="14" rx="2" fill="#1b72c4"/><path d="M2 4h12M2 7h12M4 10h8" stroke="#fff" stroke-dasharray="1.500 1"/></svg>
      <svg width="16" height="18" viewBox="0 0 16 18"><circle cx="6" cy="5" r="3.500" fill="#b8c4cc"/><path d="M0 14c0-5 12-5 12 0z" fill="#b8c4cc"/><rect x="8" y="11" width="8" height="6" fill="#fff" stroke="#9ab"/></svg>
      <svg width="14" height="16" viewBox="0 0 14 16"><path d="M4 0h6l4 3-2 3-1-1v11H3V5L2 6 0 3z" fill="#1b72c4"/></svg>
      <svg width="14" height="16" viewBox="0 0 14 16"><path d="M13 3l-3 3-2-2 3-3C8 0 6 2 6 5L1 12c-1 2 1 4 3 3l6-6c3 0 4-3 3-6z" fill="#1b72c4"/></svg>
    </div>
    <div class="ball"><span>71</span></div>
  </div>
</template>

<style scoped>
.page { position: relative; width: 1366px; height: 768px; overflow: hidden; background: #f0f0f0; font: 12px "Noto Sans CJK SC", "Liberation Sans", sans-serif; color: #111; }
.title { height: 23px; background: #fff; display: flex; align-items: center; }
.logo { width: 15px; height: 15px; margin-left: 2px; background: #1a8ae0; border-radius: 2px; display: flex; flex: none; }
.ttl { margin-left: 6px; color: #808080; font: 12.7px "Liberation Sans", "Noto Sans CJK SC", sans-serif; white-space: nowrap; flex: none; }
.winbtns { margin-left: auto; display: flex; gap: 32px; margin-right: 18px; }
.menu { height: 31px; background: #f8f8f8; border-top: 1px solid #eee; box-sizing: border-box; display: flex; align-items: center; padding-left: 7px; white-space: nowrap; }
.menu > * { flex: none; }
.mi { display: block; }
.mi2 { display: flex; align-items: center; gap: 6px; margin-left: 4px; width: 74px; }
.arrm { display: block; width: 0; height: 0; border: 3px solid transparent; border-top: 4px solid #222; border-bottom: 0; }
.a-a { margin-left: 0; }
.a-b { margin-left: 1px; }
.mi3 { display: flex; align-items: center; gap: 3px; margin-left: 8px; width: 62px; }
.ask { width: 185px; padding-left: 29px; box-sizing: border-box; background: #fdfdfd; height: 30px; line-height: 30px; color: #3a6e00; }
.user { display: flex; align-items: center; gap: 4px; margin-left: 8px; width: 102px; font: 12.5px "Liberation Sans", sans-serif; }
.bean { margin-left: 9px; width: 56px; }
.end { margin-left: 36px; align-self: flex-start; }
.r1 { height: 27px; }
.main { display: flex; margin-top: 3px; height: 624px; }
.side { width: 254px; flex: none; display: flex; flex-direction: column; }
.sh { height: 15px; background: #f0f0f0; border: 1px solid #999; border-width: 0 1px 1px 0; display: flex; align-items: center; gap: 9px; line-height: 14px; padding-right: 4px; }
.sh span { margin-right: auto; font-size: 13px; }
.sbtn { margin: 1px 1px 0 1px; background: #f0f0f0; border: 1px solid #b0b0b0; border-width: 1px 0 1px 0; display: flex; align-items: center; justify-content: center; font-size: 13px; box-sizing: content-box; height: 19px; flex: none; }
.ttools { height: 28px; margin-top: 2px; display: flex; align-items: center; gap: 8px; padding-left: 7px; background: linear-gradient(#fafafa, #f2f2f2); flex: none; }
.treebox { height: 487px; margin: 0 2px; border: 1px solid #a0a0a0; box-sizing: border-box; background: #fff; display: flex; overflow: hidden; flex: none; }
.tree { flex: 1; overflow: hidden; margin-top: -2px; }
.tr { height: 16px; display: flex; align-items: center; white-space: nowrap; }
.chev { margin-left: 6px; }
.dash { width: 3px; border-top: 1px dotted #888; margin: 0 2px; }
.gt { margin-left: 5px; font-size: 13px; }
.vl { height: 16px; width: 1px; margin-left: 12px; border-left: 1px dotted #888; box-sizing: border-box; }
.cl { height: 16px; width: 11px; margin-left: 18px; border-left: 1px dotted #888; box-sizing: border-box; background: linear-gradient(#999, #999) no-repeat 0 8px / 10px 1px; }
.cl.lastc { height: 9px; align-self: flex-start; }
.leaf { display: flex; align-items: center; gap: 5px; height: 16px; padding-right: 1px; }
.leaf .ic { width: 15px; height: 15px; }
.lt2 { font-size: 12.5px; }
.leaf.sel { background: #d0d0d0; margin-left: -2px; padding-left: 2px; padding-right: 5px; }
.lat { font: 10px "Liberation Mono", monospace; }
.vscroll { width: 17px; flex: none; background: #f0f0f0; display: flex; flex-direction: column; }
.sa { height: 17px; display: flex; align-items: center; justify-content: center; flex: none; }
.bot { margin-top: auto; }
.thumb { height: 293px; background: #cdcdcd; flex: none; }
.work { flex: 1; margin-left: 4px; display: flex; flex-direction: column; min-width: 0; }
.r2 { height: 24px; }
.r3 { height: 24px; margin-top: 4px; }
.r4 { height: 24px; margin-top: 4px; }
.r5 { height: 28px; margin-top: 2px; }
.canvas { height: 209px; background: #000; flex: none; }
.canvas svg { display: block; }
.cl-t { font: 15px "Liberation Sans", sans-serif; fill: #cfcfcf; }
.dim { font: 15px "Liberation Sans", sans-serif; fill: #d8d8d8; }
.r6 { height: 24px; margin-top: 2px; }
.lower { flex: 1; display: flex; margin-top: 4px; min-height: 0; }
.strip { width: 13px; flex: none; padding-top: 3px; }
.dots { display: block; width: 7px; height: 240px; margin: 4px 0 0 2px; background: radial-gradient(circle, #bbb 1px, transparent 1.2px) 0 0 / 4px 4px; }
.parts { flex: 1; display: flex; flex-direction: column; min-width: 0; padding-top: 5px; }
.r7 { height: 23px; flex: none; }
.table { margin: 3px 3px 0 0; flex: 1; background: #fff; border: 1px solid #a8a8a8; box-sizing: border-box; display: flex; flex-direction: column; overflow: hidden; }
.thead, .trow { display: grid; flex: none; }
.thead { height: 19px; }
.trow { height: 20px; }
.th { background: linear-gradient(#fcfcfc, #f1f1f1); border: 1px solid #ccc; border-width: 0 1px 1px 0; display: flex; justify-content: center; align-items: center; white-space: nowrap; overflow: hidden; font-size: 12px; }
.th.hot { background: linear-gradient(#f7dc9c, #e9b868); color: #4b0082; }
.th.clip { justify-content: flex-start; padding-left: 11px; }
.td { border: 1px solid #ccc; border-width: 0 1px 1px 0; }
.td.rh { background: #fdd28f; text-align: center; line-height: 19px; color: #4b0082; }
.num { font-size: 11px; }
.td.cur { background: #d6e8f6; border-left: 1px solid #000; }
.fill { flex: 1; }
.hscroll { height: 16px; flex: none; margin-bottom: 1px; display: flex; align-items: center; background: #f0f0f0; }
.ha { margin-left: 6px; width: 11px; flex: none; }
.hthumb { margin-left: 2px; width: 702px; height: 16px; background: #c8c8c8; }
.hr { margin-left: auto; margin-right: 4px; }
.status { display: flex; gap: 3px; height: 20px; }
.sc { height: 20px; box-sizing: border-box; background: #f3f3f3; border: 1px solid #d5d5d5; line-height: 18px; padding-left: 2px; white-space: nowrap; flex: none; }
.mono { font: 10px/18px "Liberation Mono", monospace; }
.mix { font: 11.5px/18px "Liberation Mono", "Noto Sans CJK SC", monospace; }
.taskbar { height: 40px; background: #04090d; display: flex; position: relative; color: #fff; }
.start { width: 48px; background: #000; display: flex; align-items: center; justify-content: center; }
.search { width: 344px; background: #333; display: flex; align-items: center; }
.cort { display: block; border: 3px solid #ddd; border-radius: 50%; margin-left: 9px; box-sizing: border-box; width: 21px; height: 21px; }
.stx { margin-left: 6px; color: #8a8a8a; font-size: 14px; }
.mic { margin-left: auto; margin-right: 15px; }
.tapps { display: flex; align-items: center; margin-left: 15px; width: 505px; flex: none; }
.ta { width: 22px; height: 22px; flex: none; }
.a2 { margin-left: 27px; }
.tsep { width: 1px; height: 22px; background: #333; margin-left: 22px; flex: none; }
.a3 { margin-left: 28px; }
.a4 { margin-left: 27px; }
.a5 { margin-left: 27px; }
.a6 { width: 48px; height: 40px; margin-left: 16px; background: #383e42; display: flex; align-items: center; justify-content: center; flex: none; }
.a6 svg { background: #1585e0; border-radius: 4px; }
.a7 { margin-left: 13px; }
.a8 { margin-left: 30px; }
.a9 { margin-left: 25px; }
.a10 { margin-left: 26px; }
.runb { position: absolute; bottom: 0; height: 2px; background: #76b9ed; }
.tray { position: relative; flex: 1; }
.cpu, .clock { position: absolute; top: 3px; display: flex; flex-direction: column; align-items: center; line-height: 18px; font-size: 12px; }
.cpu { left: 96px; width: 80px; }
.clock { left: 326px; width: 80px; font-size: 13px; }
.t1, .t2, .t3, .t4, .t5, .t6, .t7 { position: absolute; }
.t1 { left: 180px; top: 16px; }
.t2 { left: 202px; top: 14px; }
.t3 { left: 228px; top: 13px; }
.t4 { left: 250px; top: 13px; }
.t5 { left: 274px; top: 9px; font-size: 14px; line-height: 20px; }
.t6 { left: 302px; top: 12px; width: 15px; height: 16px; border-radius: 3px; background: #f0501e; text-align: center; font: bold 13px/16px "Liberation Sans", sans-serif; }
.t7 { left: 413px; top: 12px; }
.dialog { position: absolute; left: 429px; top: 241px; width: 403px; height: 275px; box-sizing: border-box; border: 1px solid #1883d7; background: #f0f0f0; box-shadow: 0 0 12px rgba(0, 0, 0, .35); display: flex; flex-direction: column; }
.dtitle { height: 25px; background: #fff; display: flex; align-items: center; justify-content: space-between; padding: 0 10px 0 3px; flex: none; }
.dbody { flex: 1; padding: 0 5px; display: flex; flex-direction: column; }
.groups { display: flex; gap: 4px; margin-top: 7px; height: 140px; flex: none; }
.fs { margin: 0; border: 1px solid #d8d8d8; padding: 0; box-sizing: border-box; height: 140px; display: block; min-width: 0; }
.f1 { width: 201px; padding: 26px 0 0 15px; }
.f2 { width: 186px; padding: 17px 7px 0 14px; }
.fs legend { padding: 0 1px; line-height: 14px; font-size: 12px; margin-left: -8px; }
.chk { display: flex; align-items: center; gap: 3px; height: 14px; margin-bottom: 8px; white-space: nowrap; }
.cb2 { width: 13px; height: 13px; box-sizing: border-box; border: 1px solid #444; background: #fff; display: flex; align-items: center; justify-content: center; flex: none; }
.note { margin: 0; font-size: 12px; line-height: 13px; white-space: nowrap; }
.n1 { margin-top: 14px; }
.n2 { margin-top: 9px; margin-left: 1px; }
.field { display: flex; justify-content: space-between; align-items: center; height: 19px; margin-bottom: 23px; }
.f-b { margin-bottom: 0; }
.inp { width: 98px; height: 19px; box-sizing: border-box; background: #fff; border: 1px solid #8a8a8a; font: 10px/17px "Liberation Mono", monospace; padding-left: 2px; display: flex; align-items: center; }
.act2 { border-color: #6f8ca8; }
.caret { width: 1px; height: 13px; background: #000; margin-left: 1px; }
.whole { margin: 12px 0 0 3px; height: 14px; }
.desc { margin: 8px 0 0 3px; font-size: 12px; line-height: 12px; display: flex; flex-direction: column; white-space: nowrap; }
.d2 { margin-left: 35px; }
.dbtns { display: flex; justify-content: flex-end; gap: 15px; margin: 11px 8px 0 0; }
.db { width: 72px; height: 23px; background: #e1e1e1; border: 1px solid #adadad; font: 12px "Noto Sans CJK SC", sans-serif; padding: 0; color: #111; }
.redbox { position: absolute; border: 3px solid #f00; box-sizing: border-box; pointer-events: none; }
.rb1 { left: 714px; top: 290px; width: 83px; height: 80px; }
.rb2 { left: 1341px; top: 162px; width: 25px; height: 37px; }
.slash { position: absolute; left: 1326px; top: 153px; }
.ime { position: absolute; left: 866px; top: 3px; width: 186px; height: 24px; box-sizing: border-box; background: #fff; border: 1px solid #b9d0e6; display: flex; align-items: center; justify-content: space-between; padding-right: 4px; }
.s-logo { width: 22px; height: 30px; margin: 0 6px 0 -1px; background: #f0501e; border-radius: 3px; color: #fff; font: bold 22px/30px "Liberation Sans", sans-serif; text-align: center; transform: rotate(-6deg); position: relative; top: 3px; }
.ime-z { color: #1b72c4; font-size: 15px; font-weight: 700; }
.ime-p { color: #1b72c4; font: bold 13px "Liberation Sans", sans-serif; }
.ball { position: absolute; left: 1107px; top: -30px; width: 48px; height: 48px; border-radius: 50%; box-sizing: border-box; background: #2fb457; border: 3px solid #cfd6cf; box-shadow: 0 2px 4px rgba(0, 0, 0, .25); color: #fff; font: bold 12px "Liberation Sans", sans-serif; display: flex; justify-content: center; align-items: flex-end; padding-bottom: 1px; }
</style>

<style>
html, body { margin: 0; overflow: hidden; }
.ic { display: block; flex: none; }
.bar { display: flex; flex: none; }
.band { height: 100%; box-sizing: border-box; display: flex; align-items: center; background: #f9f9f9; flex: none; overflow: hidden; }
.it { display: flex; align-items: center; height: 100%; flex: none; white-space: nowrap; }
.tx { font-size: 12px; }
.tx.tm { margin-left: 5px; }
.tx.gr { color: #888; }
.tx.bd { font-weight: 700; font-family: "Liberation Serif", serif; font-size: 14px; }
.sep { width: 1px; height: 20px; background: #b8b8b8; display: block; }
.grip { width: 3px; height: 18px; display: block; background: radial-gradient(circle, #999 1px, transparent 1.2px) 0 0 / 3px 4px; }
.arr { display: block; width: 0; height: 0; border: 3px solid transparent; border-top: 4px solid #222; border-bottom: 0; }
.more { font: 700 12px "Liberation Mono", monospace; align-self: flex-start; margin-top: 4px; }
.chkb { display: block; width: 12px; height: 12px; box-sizing: border-box; border: 1px solid #999; background: #fff; }
.combo { display: flex; height: 22px; background: #fff; align-items: center; }
.ct { flex: 1; padding-left: 2px; font-size: 12px; }
.cb { width: 12px; height: 22px; background: #f3f3f3; display: flex; align-items: center; justify-content: center; }
.spin { display: flex; height: 22px; border: 1px solid #8a8a8a; box-sizing: border-box; background: #f6f6f6; align-items: center; }
.sv { flex: 1; text-align: right; color: #777; font: 13px "Liberation Sans", sans-serif; padding-right: 5px; }
.sb { width: 14px; display: flex; flex-direction: column; align-items: center; gap: 6px; }
.su, .sd { display: block; width: 0; height: 0; border: 3px solid transparent; }
.su { border-bottom: 4px solid #555; border-top: 0; }
.sd { border-top: 4px solid #555; border-bottom: 0; }
.act { display: flex; align-items: center; height: 100%; box-sizing: border-box; border: 2px solid #1a86d8; background: #e8f2fa; padding-left: 2px; }
</style>
